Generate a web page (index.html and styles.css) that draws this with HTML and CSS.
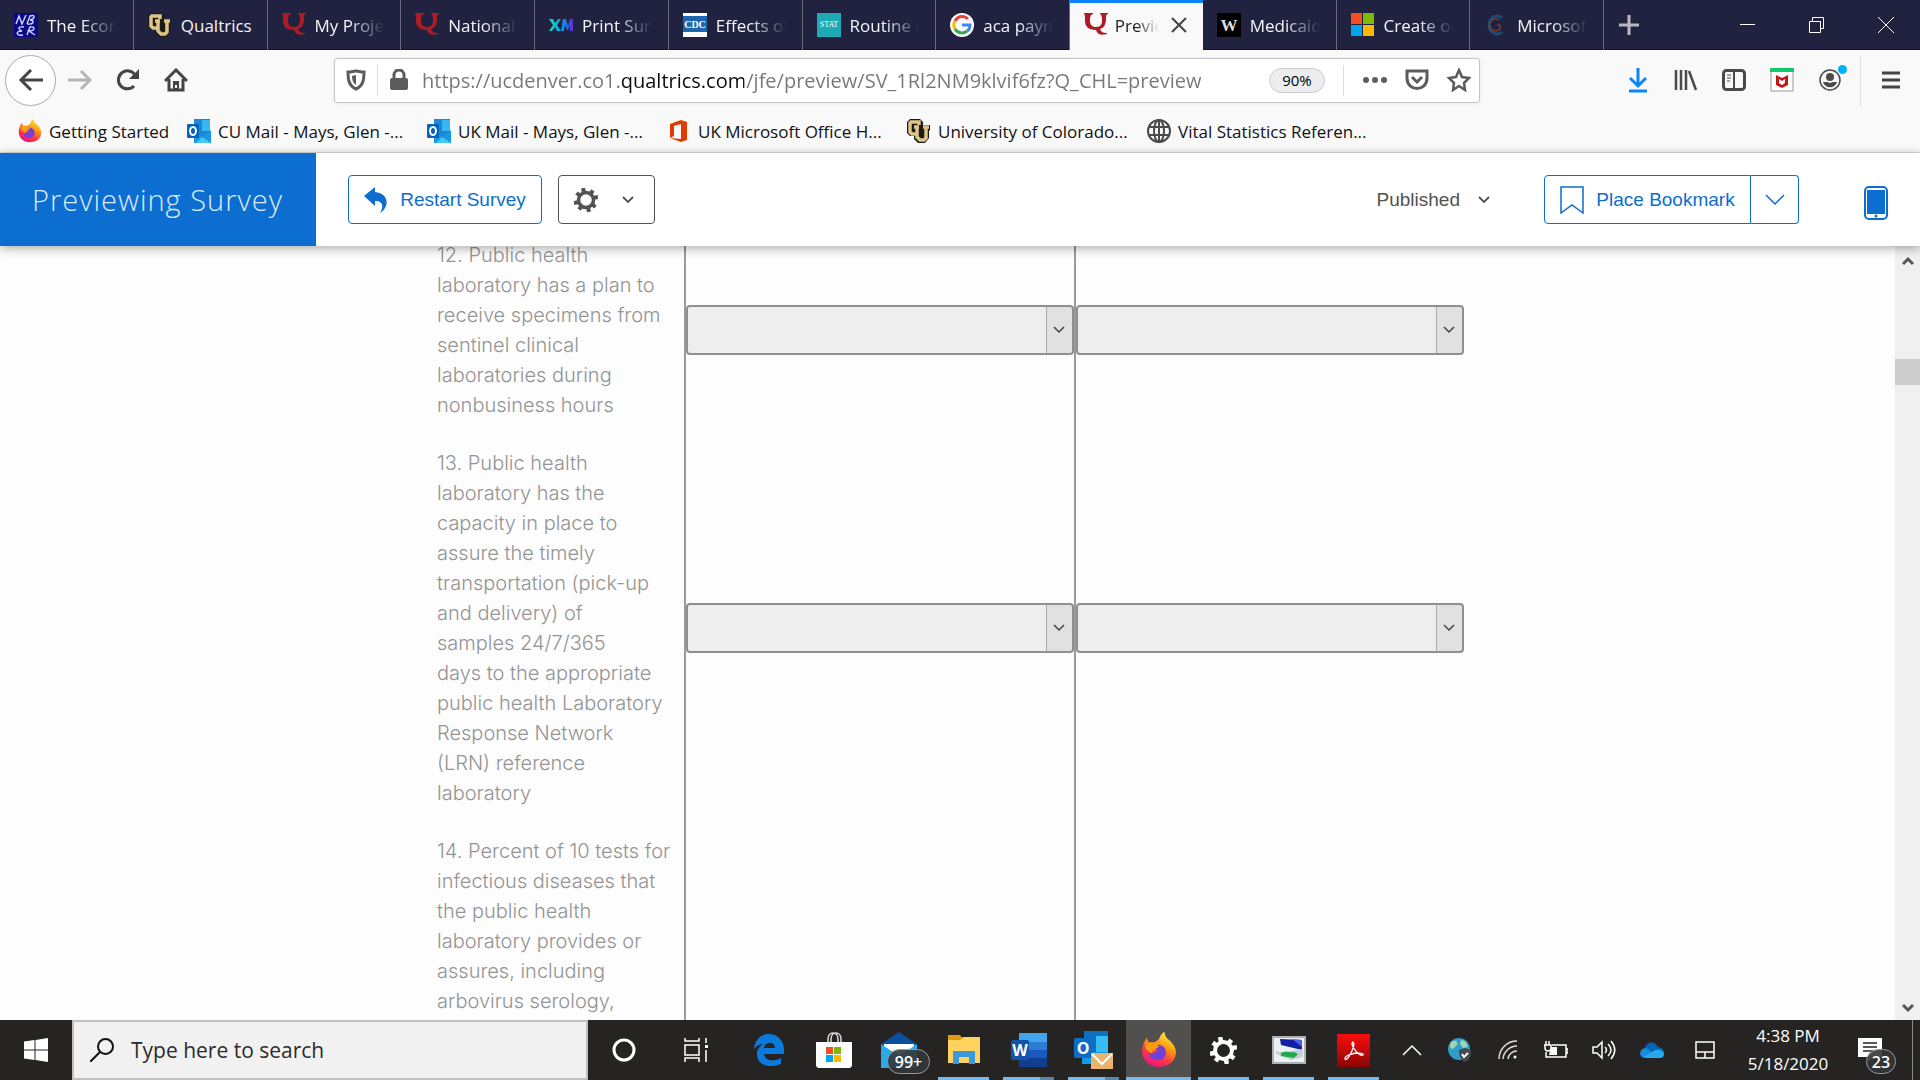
FILE: index.html
```html
<!DOCTYPE html>
<html lang="en">
  <head>
    <meta charset="UTF-8" />
    <meta name="viewport" content="width=device-width, initial-scale=1.0" />
    <title>Preview - Online Survey</title>
    <link rel="stylesheet" href="styles.css">
  </head>
  <body>
    <!-- shared icons -->
    <svg class="defs" aria-hidden="true">
      <defs>
        <linearGradient id="xm-fill" x1="0" x2="1">
          <stop offset="0" stop-color="#21dbaa" />
          <stop offset="0.5" stop-color="#00a1f0" />
          <stop offset="1" stop-color="#5a2fd0" />
        </linearGradient>
        <linearGradient id="fox-fill" x1="0.8" y1="0" x2="0.3" y2="1">
          <stop offset="0" stop-color="#fff44f" />
          <stop offset="0.4" stop-color="#ff980e" />
          <stop offset="0.7" stop-color="#ff3647" />
          <stop offset="1" stop-color="#e31587" />
        </linearGradient>
        <linearGradient id="acro-fill" x1="0" x2="0" y1="0" y2="1">
          <stop offset="0" stop-color="#fb0d0d" />
          <stop offset="1" stop-color="#8a0505" />
        </linearGradient>
      </defs>
      <symbol id="i-q" viewBox="0 0 24 24">
        <path d="M0 0h9v1C7 1 6 3 6 7c0 5 2 7 6 7 5 0 6-3 6-7 0-4-1-6-2-6V0h8v1c-2 0-2 2-2 5 0 5-2 9-6 10 1 3 3 4 7 4v1c-6 2-10 0-11-4C4 17 1 13 1 8c0-4 0-7-1-7z" fill="#ad1c25" />
      </symbol>
      <symbol id="i-cu" viewBox="0 0 24 24">
        <path d="M3 0h10l3 3v3h7v5l-1 1v7l-4 5h-7l-4-4v-3H3l-3-3V3z" fill="#1c1a16" />
        <path d="M12 6V3H4L3 4v9l2 2h4" fill="none" stroke="#dcc586" stroke-width="3.5" />
        <path d="M7 8h5M10 8v10l3 3h4l2-2V8M16 8h6" fill="none" stroke="#dcc586" stroke-width="3.5" />
      </symbol>
      <symbol id="i-fox" viewBox="0 0 32 32">
        <path d="M16 31C7 31 1 25 1 17c0-5 2-9 4-12l2 4 5 0c2-1 4-2 5-5 1-2 2-3 4-4 0 3 1 5 4 7 3 3 6 6 6 11 0 8-7 13-15 13z" fill="url(#fox-fill)" />
        <path d="M10 14c4-4 11-3 12 3 1 5-3 8-7 8-5 0-8-3-8-7l4 1 4-3-5-2z" fill="#7040d8" />
        <path d="M4 9c3 1 6 0 9 1l3 3-5 3-2 3C5 17 3 13 4 9z" fill="#ff9a18" />
      </symbol>
      <symbol id="i-outlook" viewBox="0 0 24 24">
        <path d="M7 0h16v23H7z" fill="#1c86d8" />
        <path d="M15 1h8v11h-8z" fill="#38b6f1" />
        <path d="m7 12 8 6 9-7v13H7z" fill="#1a98e6" />
        <path d="m9 24 6-6 9 6z" fill="#45c8f4" />
        <rect y="5" width="12" height="14" rx="1" fill="#0763bd" />
        <ellipse cx="6" cy="12" rx="3" ry="4" fill="none" stroke="#fff" stroke-width="2" />
      </symbol>
      <symbol id="i-caret" viewBox="0 0 12 8">
        <path d="m1 1 5 5 5-5" fill="none" stroke="currentColor" stroke-width="1.8" />
      </symbol>
      <symbol id="i-gear" viewBox="0 0 24 24">
        <g fill="none" stroke="currentColor">
          <path d="M9 0 10 5M15 24l-1-5M0 15l5-1M24 9l-5 1M2.500 5l4 3M21.500 19l-4-3M5 21.500l3-4M19 2.500l-3 4" stroke-width="4" />
          <circle cx="12" cy="12" r="7.5" stroke-width="3.5" />
        </g>
      </symbol>
    </svg>

    <header class="browser">
      <div class="tab-strip">
        <nav class="tabs" aria-label="Tabs">
          <button class="tab">
            <svg class="favicon" viewBox="0 0 24 24"><path d="M0 0h24v24H0z" fill="#0a0a88" /><path d="m2 11 3-8 3 8 4-9M13 11l3-8c6-2 5 3 0 4 5 0 4 5-3 4M10 14c-8-1-5 3-2 4-7 0-6 5 1 4M13 22l3-8c6-1 5 4-1 4l6 4" fill="none" stroke="#d8d8ff" stroke-width="1.4" /></svg>
            <span class="tab-title">The Econ</span>
          </button>
          <button class="tab">
            <svg class="favicon"><use href="#i-cu" /></svg>
            <span class="tab-title short">Qualtrics</span>
          </button>
          <button class="tab">
            <svg class="favicon"><use href="#i-q" /></svg>
            <span class="tab-title">My Proje</span>
          </button>
          <button class="tab">
            <svg class="favicon"><use href="#i-q" /></svg>
            <span class="tab-title">National</span>
          </button>
          <button class="tab">
            <svg class="favicon" viewBox="0 0 24 24"><path d="M0 6h4l2 4 3-4h3l-4 6 4 6H8l-2-4-3 4H0l4-6zm12 12 2-12h3l2 7 2-7h3v12h-3v-6l-2 5h-1l-2-5-1 6z" fill="url(#xm-fill)" /></svg>
            <span class="tab-title">Print Sur</span>
          </button>
          <button class="tab">
            <svg class="favicon" viewBox="0 0 24 24"><path d="M0 0h24v24H0z" fill="#fff" /><path d="M0 3h24v16H0z" fill="#1c66ad" /><text x="12" y="15" text-anchor="middle" class="mark-cdc">CDC</text></svg>
            <span class="tab-title">Effects of</span>
          </button>
          <button class="tab">
            <svg class="favicon" viewBox="0 0 24 24"><path d="M0 0h24v24H0z" fill="#1caab4" /><text x="12" y="14" text-anchor="middle" class="mark-stat">STAT</text></svg>
            <span class="tab-title">Routine c</span>
          </button>
          <button class="tab">
            <svg class="favicon" viewBox="0 0 24 24"><circle cx="12" cy="12" r="12" fill="#fff" /><g fill="none" stroke-width="3"><path d="M5 8a8 8 0 0 1 13-2" stroke="#ea4335" /><path d="M5 16a8 8 0 0 1 0-8" stroke="#fbbc05" /><path d="M17 18a8 8 0 0 1-12-2" stroke="#34a853" /><path d="M12 12h8c0 3-1 5-3 6" stroke="#4285f4" /></g></svg>
            <span class="tab-title">aca paym</span>
          </button>
          <button class="tab active">
            <svg class="favicon"><use href="#i-q" /></svg>
            <span class="tab-title">Previe</span>
            <svg class="tab-close" viewBox="0 0 16 16"><path d="m1 1 14 14M15 1 1 15" stroke="#444" stroke-width="2" /></svg>
          </button>
          <button class="tab">
            <svg class="favicon" viewBox="0 0 24 24"><path d="M0 0h24v24H0z" fill="#000" /><text x="12" y="18" text-anchor="middle" class="mark-w">W</text></svg>
            <span class="tab-title">Medicaid</span>
          </button>
          <button class="tab">
            <svg class="favicon" viewBox="0 0 24 24"><path d="M0 0h11v11H0z" fill="#f25022" /><path d="M12 0h11v11H12z" fill="#7fba00" /><path d="M0 12h11v11H0z" fill="#00a4ef" /><path d="M12 12h11v11H12z" fill="#ffb900" /></svg>
            <span class="tab-title">Create or</span>
          </button>
          <button class="tab">
            <svg class="favicon" viewBox="0 0 24 24"><path d="M18 5a8 9 0 1 0 0 14" fill="none" stroke="#1f4b75" stroke-width="3" /><path d="M15 7a6 6 0 1 0 1 9v-4h-3" fill="none" stroke="#84452f" stroke-width="1.2" /></svg>
            <span class="tab-title">Microsof</span>
          </button>
        </nav>
        <button class="new-tab" aria-label="New tab">
          <svg width="22" height="22" viewBox="0 0 22 22"><path d="M11 1v20M1 11h20" stroke="#b9b9c4" stroke-width="3" /></svg>
        </button>
        <div class="window-buttons">
          <button aria-label="Minimize"><svg width="16" height="16"><path d="M0 7.500h15" stroke="#fff" /></svg></button>
          <button aria-label="Restore"><svg width="16" height="16" fill="none" stroke="#fff"><path d="M.5 4.500h11v11H.5zM3.500 4V.5h11v11H12" /></svg></button>
          <button aria-label="Close"><svg width="16" height="16" stroke="#fff"><path d="m0 0 16 16M16 0 0 16" /></svg></button>
        </div>
      </div>

      <div class="toolbar">
        <div class="nav-buttons">
          <button class="back" aria-label="Back"><svg width="26" height="24" viewBox="0 0 26 24"><path d="M13 2 3 12l10 10M3 12h22" fill="none" stroke="#444" stroke-width="3" /></svg></button>
          <button aria-label="Forward"><svg width="24" height="22" viewBox="0 0 24 22"><path d="m13 2 9 9-9 9M22 11H0" fill="none" stroke="#b5b5b5" stroke-width="3" /></svg></button>
          <button aria-label="Reload"><svg width="24" height="24" viewBox="0 0 24 24"><path d="M18 18A9 9 0 1 1 19 7" fill="none" stroke="#444" stroke-width="3" /><path d="M23 1v10H13z" fill="#444" /></svg></button>
          <button aria-label="Home"><svg width="24" height="24" viewBox="0 0 24 24"><path d="M1 13 12 2l11 11M5 11v11h14V11" fill="none" stroke="#444" stroke-width="3" /><path d="M9 13h6v9H9z" fill="#444" /><path d="M11 17h2v3h-2z" fill="#fff" /></svg></button>
        </div>
        <div class="url-bar">
          <svg class="shield" width="20" height="22" viewBox="0 0 20 22"><path d="M2 3c3 0 6-1 8-1s5 1 8 1c0 8-1 14-8 17C3 17 2 11 2 3z" fill="none" stroke="#5c5c5c" stroke-width="3" /><path d="M10 6v10c-3-2-4-5-4-9z" fill="#5c5c5c" /></svg>
          <svg class="lock" width="18" height="22" viewBox="0 0 18 22"><rect y="9" width="18" height="12" rx="2" fill="#5c5c5c" /><path d="M4 10V6a5 5 0 0 1 10 0v4" fill="none" stroke="#5c5c5c" stroke-width="3" /></svg>
          <input class="url" type="text" aria-label="Address" value="https://ucdenver.co1.qualtrics.com/jfe/preview/SV_1Rl2NM9klvif6fz?Q_CHL=preview" />
          <button class="zoom-level">90%</button>
          <div class="page-actions">
            <button aria-label="Page actions"><svg width="24" height="8" fill="#5c5c5c"><circle cx="3" cy="4" r="3" /><circle cx="12" cy="4" r="3" /><circle cx="21" cy="4" r="3" /></svg></button>
            <button aria-label="Save to Pocket"><svg width="24" height="22" viewBox="0 0 24 22" fill="none" stroke="#5c5c5c" stroke-width="3"><path d="M2 2h20v7c0 14-20 14-20 0z" /><path d="m7 8 5 5 5-5" /></svg></button>
            <button aria-label="Bookmark this page"><svg width="24" height="24" viewBox="0 0 24 24"><path d="m12 2 3 7 7 1-5 5 1 7-6-4-6 4 1-7-5-5 7-1z" fill="none" stroke="#5c5c5c" stroke-width="2.500" /></svg></button>
          </div>
        </div>
        <div class="tools">
          <button aria-label="Downloads"><svg width="20" height="26" viewBox="0 0 20 26" fill="none" stroke="#0a84ff" stroke-width="3"><path d="M10 1v17M2 11l8 8 8-8M1 24h18" /></svg></button>
          <button aria-label="Library"><svg width="24" height="22" viewBox="0 0 24 22" stroke="#4a4a4a" stroke-width="2.500"><path d="M2 1v20M7 1v20M12 1v20M15 2l7 19" /></svg></button>
          <button aria-label="Sidebars"><svg width="24" height="22" viewBox="0 0 24 22" fill="none" stroke="#4a4a4a"><rect x="1.500" y="1.500" width="21" height="19" rx="3" stroke-width="3" /><path d="M12 2v18" stroke-width="2" /><path d="M5 6h4M5 9h4M5 12h3" /></svg></button>
          <button aria-label="McAfee"><svg width="24" height="24" viewBox="0 0 24 24"><rect x="1" y="1" width="22" height="22" fill="#fff" stroke="#999" /><path d="M0 0h24v4H0z" fill="#11c96a" /><path d="m6 7 6 3 6-3v10l-6 3-6-3z" fill="#c01818" /><path d="m9 11 3 2 3-2v4l-3 2-3-2z" fill="#fff" /></svg></button>
          <button class="account" aria-label="Account"><svg width="22" height="22" viewBox="0 0 22 22"><circle cx="11" cy="11" r="10" fill="none" stroke="#4a4a4a" stroke-width="1.500" /><circle cx="11" cy="8" r="4" fill="#4a4a4a" /><path d="M4 13h4l3 1 3-1h4c-2 7-12 7-14 0z" fill="#4a4a4a" /></svg><span class="dot"></span></button>
          <button class="menu" aria-label="Menu"><svg width="18" height="20" stroke="#444" stroke-width="3"><path d="M0 3h18M0 10h18M0 17h18" /></svg></button>
        </div>
      </div>

      <nav class="bookmarks" aria-label="Bookmarks">
        <a href="#" class="first"><svg class="favicon"><use href="#i-fox" /></svg>Getting Started</a>
        <a href="#"><svg class="favicon"><use href="#i-outlook" /></svg>CU Mail - Mays, Glen -...</a>
        <a href="#"><svg class="favicon"><use href="#i-outlook" /></svg>UK Mail - Mays, Glen -...</a>
        <a href="#"><svg class="favicon" viewBox="0 0 24 24"><path d="M3 5 14 1l6 2v18l-6 2-11-4 11 1V5L7 7v10l-4 2z" fill="#e13b00" /></svg>UK Microsoft Office H...</a>
        <a href="#"><svg class="favicon"><use href="#i-cu" /></svg>University of Colorado...</a>
        <a href="#"><svg class="favicon" viewBox="0 0 24 24" fill="none" stroke="#4a4a4a" stroke-width="2"><circle cx="12" cy="12" r="11" /><ellipse cx="12" cy="12" rx="5" ry="11" /><path d="M12 1v22M2 8h20M2 16h20" /></svg>Vital Statistics Referen...</a>
      </nav>
    </header>

    <section class="preview-bar">
      <h1>Previewing Survey</h1>
      <div class="left-actions">
        <button class="outline blue restart">
          <svg width="24" height="26" viewBox="0 0 24 26"><path d="M0 9 11 0v5c14 1 15 15 5 21 4-7 3-12-5-12v5z" fill="currentColor" /></svg>
          Restart Survey
        </button>
        <button class="outline gear" aria-label="Tools">
          <svg width="24" height="24"><use href="#i-gear" /></svg>
          <svg width="12" height="8"><use href="#i-caret" /></svg>
        </button>
      </div>
      <button class="published">Published <svg width="12" height="8"><use href="#i-caret" /></svg></button>
      <div class="bookmark-group">
        <button class="outline blue place">
          <svg width="24" height="28" viewBox="0 0 24 28"><path d="M1 1h22v26l-11-8-11 8z" fill="none" stroke="currentColor" stroke-width="1.500" /></svg>
          Place Bookmark
        </button>
        <button class="outline blue more" aria-label="More bookmarks"><svg width="20" height="12" viewBox="0 0 20 12"><path d="m1 1 9 9 9-9" fill="none" stroke="currentColor" stroke-width="1.500" /></svg></button>
      </div>
      <button class="device" aria-label="Mobile view">
        <svg width="24" height="34" viewBox="0 0 24 34"><rect x="1" y="1" width="22" height="32" rx="4" fill="#fff" stroke="#0b6ed0" stroke-width="2" /><path d="M3 4h18v24H3z" fill="#0b6ed0" /><circle cx="12" cy="30" r="1.500" fill="#0b6ed0" /></svg>
      </button>
    </section>

    <main class="page">
      <div class="survey">
        <table class="matrix">
          <tbody>
            <tr>
              <th scope="row" id="q12">12. Public health<br />laboratory has a plan to<br />receive specimens from<br />sentinel clinical<br />laboratories during<br />nonbusiness hours</th>
              <td><select aria-labelledby="q12"><option></option></select></td>
              <td><select aria-labelledby="q12"><option></option></select></td>
            </tr>
            <tr>
              <th scope="row" id="q13">13. Public health<br />laboratory has the<br />capacity in place to<br />assure the timely<br />transportation (pick-up<br />and delivery) of<br />samples 24/7/365<br />days to the appropriate<br />public health Laboratory<br />Response Network<br />(LRN) reference<br />laboratory</th>
              <td><select aria-labelledby="q13"><option></option></select></td>
              <td><select aria-labelledby="q13"><option></option></select></td>
            </tr>
            <tr class="last">
              <th scope="row" id="q14">14. Percent of 10 tests for<br />infectious diseases that<br />the public health<br />laboratory provides or<br />assures, including<br />arbovirus serology,</th>
              <td></td>
              <td></td>
            </tr>
          </tbody>
        </table>
      </div>
      <div class="scrollbar">
        <svg width="12" height="10" viewBox="0 0 12 10"><path d="m1 8 5-5 5 5" fill="none" stroke="#555" stroke-width="3" /></svg>
        <div class="track"><div class="thumb"></div></div>
        <svg width="12" height="10" viewBox="0 0 12 10"><path d="m1 2 5 5 5-5" fill="none" stroke="#555" stroke-width="3" /></svg>
      </div>
    </main>

    <footer class="taskbar">
      <button class="start" aria-label="Start"><svg width="24" height="24" viewBox="0 0 24 24" fill="#fff"><path d="M0 3.500 10.500 2v9.500H0zM11.500 2 24 0v11.500H11.500zM0 12.500h10.500V22L0 20.500zM11.500 12.500H24V24l-12.500-2z" /></svg></button>
      <label class="search">
        <svg width="24" height="24" viewBox="0 0 24 24" fill="none" stroke="#111" stroke-width="2"><circle cx="15.500" cy="8.500" r="7.500" /><path d="M10 14 0 24" /></svg>
        <input type="text" placeholder="Type here to search" aria-label="Search" />
      </label>
      <div class="apps">
        <button class="wide" aria-label="Cortana"><svg width="24" height="24"><circle cx="12" cy="12" r="10" fill="none" stroke="#fff" stroke-width="3" /></svg></button>
        <button class="wide" aria-label="Task view"><svg width="24" height="24" fill="none" stroke="#fff" stroke-width="1.500"><path d="M1 0v3h14V0M1 7h14v10H1zM1 24v-4h14v4M22 0v5M22 12v12" /><path d="M21 7h3v3h-3z" fill="#fff" stroke="none" /></svg></button>
        <button aria-label="Edge"><svg width="32" height="32" viewBox="0 0 32 32"><path d="M1 15C2 6 8 0 16 0c9 0 15 7 15 16v4H11c1 7 10 8 17 4v6c-12 5-24 1-24-10 0-5 3-8 6-10-4 0-7 2-9 5zm10-1h11c0-7-10-7-11 0z" fill="#0a7bdc" /></svg></button>
        <button aria-label="Store"><svg width="36" height="36" viewBox="0 0 36 36"><path d="M12 10V7c0-8 10-8 10 0v3M15 10V7c0-8 10-8 10 0v3" fill="none" stroke="#ddd" stroke-width="1.500" /><path d="M0 10h36v24l-2 2H2l-2-2z" fill="#fff" /><path d="M10 15h7v7h-7z" fill="#f25022" /><path d="M18 15h7v7h-7z" fill="#7fba00" /><path d="M10 23h7v7h-7z" fill="#00a4ef" /><path d="M18 23h7v7h-7z" fill="#ffb900" /></svg></button>
        <button aria-label="Mail"><svg width="36" height="36" viewBox="0 0 36 36"><path d="M0 12 18 0l18 12v24H0z" fill="#0a4f9c" /><path d="M3 12h30v12H3z" fill="#fff" /><path d="m0 12 18 12L36 12v24H0z" fill="#2aa9e8" /></svg><span class="badge">99+</span></button>
        <button class="open" aria-label="File Explorer"><svg width="32" height="30" viewBox="0 0 32 30"><path d="M0 0h12l3 4v6H0z" fill="#e09b0b" /><path d="M0 5h12l3-3h17v26H0z" fill="#fdd25e" /><path d="M5 16h22v13h-6v-7H11v7H5z" fill="#3a98db" /></svg></button>
        <button class="open stacked" aria-label="Word"><svg width="36" height="34" viewBox="0 0 36 34"><path d="M8 0h28v9H8z" fill="#41a5ee" /><path d="M8 9h28v8H8z" fill="#2b7cd3" /><path d="M8 17h28v8H8z" fill="#185abd" /><path d="M8 25h28v9H8z" fill="#103f91" /><rect y="7" width="18" height="20" rx="2" fill="#1453ac" /><text x="9" y="23" text-anchor="middle" class="mark-app">W</text></svg></button>
        <button class="open stacked" aria-label="Outlook"><svg width="40" height="38" viewBox="0 0 40 38"><path d="M10 0h24v32H10z" fill="#0d71c1" /><path d="M22 5h12v18H22z" fill="#36bdf5" /><path d="M8 21h26v12H8z" fill="#149be4" /><rect y="7" width="18" height="20" rx="2" fill="#0f6cc4" /><text x="9" y="23" text-anchor="middle" class="mark-app">O</text><path d="M17 22h22v16H17z" fill="#ebb46e" /><path d="m18 23 10 10 10-10" fill="none" stroke="#fff" stroke-width="2" /></svg></button>
        <button class="open current" aria-label="Firefox"><svg width="36" height="36"><use href="#i-fox" /></svg></button>
        <button class="open" aria-label="Settings"><svg width="27" height="27"><use href="#i-gear" /></svg></button>
        <button class="open" aria-label="Remote desktop"><svg width="34" height="28" viewBox="0 0 34 28"><path d="M1 1h32v26H1z" fill="#eef1f4" stroke="#a9b0b6" stroke-width="2" /><path d="m8 3 22 1v10L9 9z" fill="#1420a4" /><path d="m20 3 10 1v7z" fill="#4a62e0" /><path d="m3 15 8 1 20-3v8l-12 3-15-6z" fill="#c7d0d4" /><path d="M9 17c5-3 8 0 13-1l4 2-4 4-7-1-6-1z" fill="#1faa4c" /></svg></button>
        <button class="open" aria-label="Acrobat"><svg width="33" height="33" viewBox="0 0 33 33"><path d="M0 0h33v33H0z" fill="url(#acro-fill)" /><path d="M16 8c2 1 0 7-2 11s-5 8-6 6c-1-3 6-5 11-6 5 0 8 1 7 2-3 2-10-6-11-11 0-1 0-2 1-2z" fill="none" stroke="#fff" stroke-width="1.300" /></svg></button>
      </div>
      <div class="tray">
        <button aria-label="Show hidden icons"><svg width="20" height="12" fill="none" stroke="#fff" stroke-width="1.500"><path d="m1 11 9-9 9 9" /></svg></button>
        <button aria-label="Network security"><svg width="24" height="24" viewBox="0 0 24 24"><circle cx="11" cy="11" r="11" fill="#2f9cc9" /><path d="M3 4c5-3 7 0 6 3l-4 4c-3 0-4-3-2-7zM13 2c4 0 6 3 7 7l-5 1-3-4z" fill="#9fd3b4" /><path d="m11 12 6-2 6 2c0 6-2 10-6 12-4-2-6-6-6-12z" fill="#444a52" /><path d="m14 16 2 3 4-4" fill="none" stroke="#fff" stroke-width="2" /></svg></button>
        <button aria-label="Wi-Fi"><svg width="20" height="20" fill="none" stroke="#ddd" stroke-width="1.500"><path d="M1 19A18 18 0 0 1 19 1M5 19A14 14 0 0 1 19 6M10 19a9 9 0 0 1 9-8" /><circle cx="17" cy="17" r="1.500" fill="#fff" stroke="none" /></svg></button>
        <button aria-label="Battery"><svg width="24" height="18" fill="none" stroke="#fff" stroke-width="1.500"><path d="M8 4h14v12H2v-5M22 8h2v4h-2M0 4h7v3c0 4-6 4-6 0V4M2 4V0M5 4V0" /><path d="M7 6h6v8H5z" fill="#fff" stroke="none" /></svg></button>
        <button aria-label="Volume"><svg width="24" height="20" fill="none" stroke="#fff" stroke-width="1.500"><path d="M1 7h4l5-5v16l-5-5H1zM13 7c2 2 2 4 0 6M16 4c4 4 4 8 0 12M19 1c5 6 5 12 0 18" /></svg></button>
        <button aria-label="OneDrive"><svg width="24" height="16" viewBox="0 0 24 16"><path d="M5 6c1-6 9-8 13-1 4 0 6 3 6 6H3z" fill="#0364b8" /><path d="M5 16c-7 0-6-10 1-10l12 9z" fill="#1490df" /><path d="m4 15 11-7c3-1 9 0 9 4 0 2-1 4-4 4H6z" fill="#28a8ea" /></svg></button>
        <button class="touchpad" aria-label="Touchpad"><svg width="20" height="18" fill="none" stroke="#fff" stroke-width="1.500"><path d="M1 1h18v16H1zM1 11h18M10 11v6" /></svg></button>
        <time class="clock">4:38 PM<br />5/18/2020</time>
        <button class="notifications" aria-label="Notifications"><svg width="24" height="24"><path d="M0 0h24v19h-9l-5 5v-5H0z" fill="#fff" /><path d="M5 5h14M5 9h14M5 13h10" stroke="#262422" stroke-width="1.500" /></svg><span class="badge">23</span></button>
        <button class="show-desktop" aria-label="Show desktop"></button>
      </div>
    </footer>
  </body>
</html>
```

FILE: styles.css
```css
* {
  box-sizing: border-box;
  margin: 0;
  padding: 0;
}

body {
  display: flex;
  flex-direction: column;
  height: 100vh;
  overflow: hidden;
  font-family: "Open Sans", "Noto Sans", sans-serif;
  font-size: 17px;
  background-color: #fdfdfd;
}

button,
input {
  border: none;
  background: none;
  font: inherit;
  color: inherit;
}

button {
  display: flex;
  align-items: center;
  justify-content: center;
  flex-shrink: 0;
}

svg {
  flex-shrink: 0;
}

.defs {
  position: absolute;
  width: 0;
  height: 0;
}

.favicon {
  width: 24px;
  height: 24px;
}

/* tabs */
.tab-strip {
  display: flex;
  height: 50px;
  background-color: #20223f;
  border-bottom: 1px solid #11122b;
  color: #f4f4f8;
}

.tabs {
  display: flex;
  flex: 1;
  min-width: 0;
}

.tab {
  flex: 1;
  min-width: 0;
  gap: 9px;
  padding: 0 8px 0 14px;
  height: 50px;
  border-right: 1px solid #686a80;
}

.tab-title {
  flex: 1;
  white-space: nowrap;
  text-align: left;
  mask-image: linear-gradient(to right, #000 45%, transparent 90%);
}

.tab-title.short {
  mask-image: none;
}

.tab.active {
  gap: 7px;
  background-color: #f9f9fa;
  border-right: none;
  border-top: 3px solid #0a84ff;
  padding-bottom: 3px;
  color: #222;
}

.tab-close {
  width: 16px;
  height: 16px;
  margin-right: 8px;
}

.new-tab {
  width: 50px;
}

.window-buttons {
  display: flex;
  width: 266px;
  justify-content: flex-end;
}

.window-buttons button {
  width: 69px;
}

.mark-cdc {
  font: bold 10px "Liberation Serif", serif;
  fill: #fff;
}

.mark-stat {
  font: 8px "Liberation Serif", serif;
  fill: #fff;
}

.mark-w {
  font: bold 17px "Liberation Serif", serif;
  fill: #ddd;
}

.mark-app {
  font: bold 16px "Open Sans", sans-serif;
  fill: #fff;
}

/* address bar */
.toolbar {
  display: flex;
  align-items: center;
  height: 60px;
  background-color: #f9f9fa;
}

.nav-buttons {
  display: flex;
  align-items: center;
  width: 334px;
}

.nav-buttons button {
  width: 48px;
  height: 48px;
}

.nav-buttons .back {
  width: 51px;
  height: 51px;
  margin-left: 5px;
  border: 1px solid #aaa;
  border-radius: 50%;
  background-color: #fff;
}

.url-bar {
  display: flex;
  align-items: center;
  flex: 1;
  height: 45px;
  border: 1px solid #c4c4c6;
  border-radius: 3px;
  background-color: #fff;
  box-shadow: 0 1px 4px rgba(0, 0, 0, 0.06);
}

.shield {
  margin: 0 11px;
}

.lock {
  box-sizing: content-box;
  margin-right: 14px;
  padding: 4px 0 4px 12px;
  border-left: 1px solid #ddd;
}

/* the host part of the address is darker than the rest */
.url {
  flex: 1;
  min-width: 0;
  height: 40px;
  font-size: 20px;
  color: transparent;
  background: linear-gradient(to right, #777 197px, #0c0c0d 197px, #0c0c0d 322px, #777 322px);
  background-clip: text;
}

.zoom-level {
  width: 56px;
  height: 25px;
  border: 1px solid #ccc;
  border-radius: 13px;
  background-color: #ededf0;
  font-size: 15px;
}

.page-actions {
  display: flex;
  align-items: center;
  height: 31px;
  margin-left: 18px;
  padding: 0 8px 0 19px;
  gap: 18px;
  border-left: 1px solid #ddd;
}

.tools {
  display: flex;
  justify-content: flex-end;
  width: 440px;
}

.tools button {
  width: 48px;
  height: 51px;
}

.tools .account {
  position: relative;
}

.account .dot {
  position: absolute;
  top: 10px;
  right: 7px;
  width: 9px;
  height: 9px;
  border-radius: 50%;
  background-color: #00b3f4;
}

.tools .menu {
  width: 60px;
  margin-left: 6px;
  border-left: 1px solid #ddd;
}

.bookmarks {
  display: flex;
  height: 43px;
  padding-left: 18px;
  background-color: #f9f9fa;
  border-bottom: 1px solid #ddd;
}

.bookmarks a {
  display: flex;
  align-items: center;
  gap: 7px;
  width: 240px;
  white-space: nowrap;
  color: #111;
  text-decoration: none;
}

.bookmarks .first {
  width: 169px;
}

/* survey preview header */
.preview-bar {
  display: flex;
  align-items: center;
  height: 93px;
  flex-shrink: 0;
  z-index: 1;
  background-color: #fff;
  box-shadow: 0 2px 10px rgba(0, 0, 0, 0.35);
  font-family: "Liberation Sans", Arial, sans-serif;
  font-size: 19px;
  color: #525252;
}

.preview-bar h1 {
  display: flex;
  align-items: center;
  width: 316px;
  height: 93px;
  padding-left: 32px;
  background-color: #0b6ed0;
  color: #dceafa;
  font-family: "Open Sans", sans-serif;
  font-size: 29px;
  font-weight: 300;
  letter-spacing: 1px;
  white-space: nowrap;
}

.left-actions {
  display: flex;
  flex: 1;
  gap: 16px;
  margin-left: 32px;
}

.outline {
  height: 49px;
  border: 1px solid #525252;
  border-radius: 4px;
}

.blue {
  border-color: #0b6ed0;
  color: #0b6ed0;
}

.restart {
  width: 194px;
  gap: 12px;
}

.gear {
  width: 97px;
  gap: 24px;
  padding-right: 5px;
}

.published {
  gap: 18px;
}

.bookmark-group {
  display: flex;
  margin-left: 54px;
}

.place {
  width: 207px;
  gap: 12px;
  border-radius: 4px 0 0 4px;
}

.more {
  width: 48px;
  border-left: none;
  border-radius: 0 4px 4px 0;
}

.device {
  margin: 6px 32px 0 65px;
}

/* survey */
.page {
  display: flex;
  flex: 1;
  min-height: 0;
  overflow: hidden;
}

.survey {
  flex: 1;
}

.matrix {
  width: 1033px;
  margin: -20px auto 0;
  border-spacing: 0;
  table-layout: fixed;
}

.matrix th {
  width: 253px;
  padding: 14px 0 14px 6px;
  vertical-align: top;
  text-align: left;
  font-family: "Inter", sans-serif;
  font-size: 20px;
  font-weight: 300;
  line-height: 30px;
  white-space: nowrap;
  color: #949494;
}

.matrix td {
  border-left: 2px solid #999;
  vertical-align: middle;
}

.matrix .last th {
  padding-bottom: 40px;
}

.matrix select {
  display: block;
  width: 100%;
  height: 50px;
  border: 2px solid #8f8f8f;
  border-radius: 4px;
  appearance: none;
  background:
    url("data:image/svg+xml,%3Csvg xmlns='http://www.w3.org/2000/svg' width='12' height='8'%3E%3Cpath d='M1 1l5 5 5-5' fill='none' stroke='%23444' stroke-width='1.500'/%3E%3C/svg%3E") right 7px center no-repeat,
    linear-gradient(to right, #aaa 1px, #e1e1e1 1px) right center / 26px 100% no-repeat,
    #eee;
}

.scrollbar {
  display: flex;
  flex-direction: column;
  align-items: center;
  width: 25px;
  padding: 10px 0 7px;
  background-color: #f0f0f0;
}

.track {
  flex: 1;
  width: 100%;
  padding-top: 93px;
}

.thumb {
  height: 26px;
  background-color: #cdcdcd;
}

/* taskbar */
.taskbar {
  display: flex;
  height: 60px;
  flex-shrink: 0;
  background-color: #262422;
  color: #fff;
}

.start {
  width: 72px;
}

.search {
  display: flex;
  align-items: center;
  gap: 17px;
  width: 516px;
  padding-left: 16px;
  border: 2px solid #c0c0c0;
  background-color: #f1f1f1;
}

.search input {
  flex: 1;
  height: 56px;
  font-size: 21px;
  color: #2b2b2b;
}

.search input::placeholder {
  color: #2b2b2b;
}

.apps {
  display: flex;
  flex: 1;
}

.apps button {
  position: relative;
  width: 65px;
}

.apps .wide {
  width: 72px;
}

.apps .wide + .wide {
  margin-right: 4px;
}

.apps .open::after {
  content: "";
  position: absolute;
  left: 7px;
  right: 7px;
  bottom: 0;
  height: 3px;
  background-color: #76b9ed;
}

.apps .stacked::after {
  background: linear-gradient(to right, #76b9ed 37px, #5387ae 37px);
}

.apps .current {
  background-color: #52504e;
}

.apps .current::after {
  left: 0;
  right: 0;
}

.badge {
  position: absolute;
  display: flex;
  align-items: center;
  justify-content: center;
  height: 25px;
  border: 1px solid #999;
  border-radius: 13px;
  background-color: rgba(50, 54, 58, 0.9);
  font-size: 16px;
  font-weight: 600;
}

.apps .badge {
  left: 21px;
  top: 29px;
  width: 43px;
}

.tray {
  display: flex;
}

.tray button {
  width: 48px;
}

.tray .touchpad {
  width: 58px;
}

.clock {
  width: 108px;
  padding-top: 2px;
  line-height: 28px;
  text-align: center;
}

.tray .notifications {
  position: relative;
  width: 70px;
  padding-right: 14px;
}

.notifications .badge {
  left: 24px;
  top: 29px;
  width: 30px;
}

.tray .show-desktop {
  width: 8px;
  border-left: 1px solid #888;
}
```
